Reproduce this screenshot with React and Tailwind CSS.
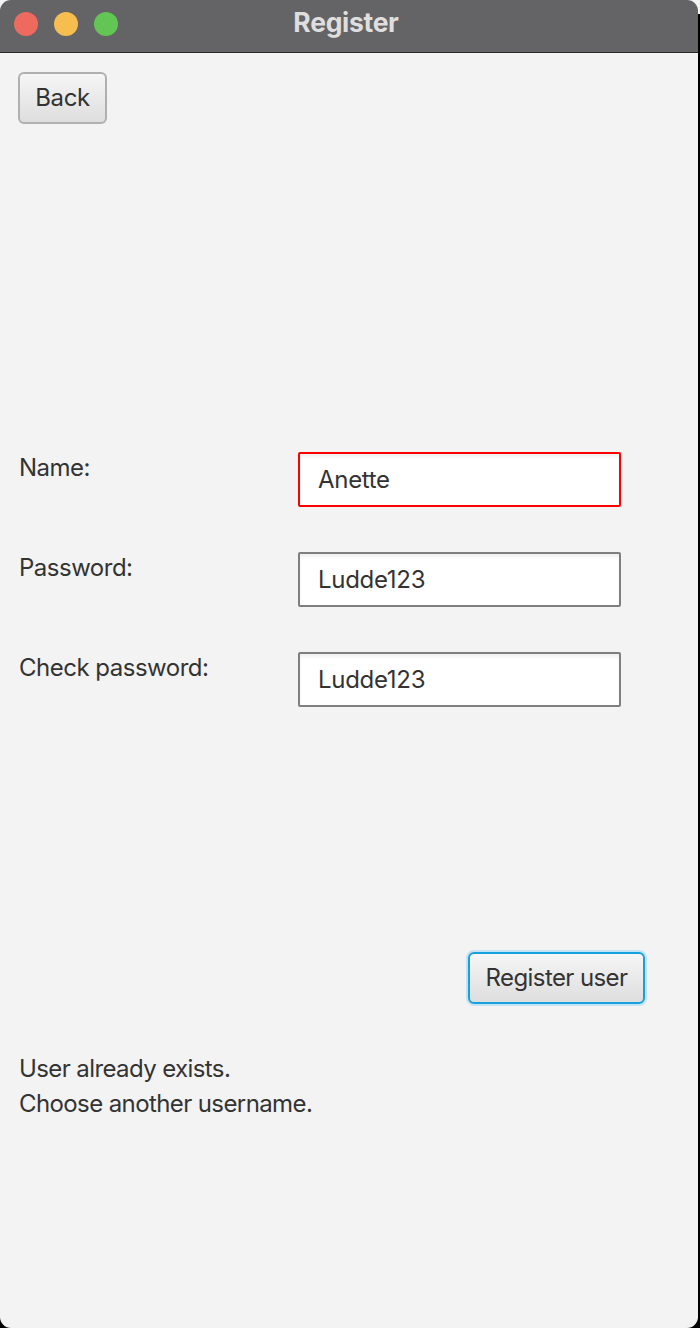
export default function App() {
    const font = { fontFamily: "Inter, 'Noto Sans', sans-serif" };

    return (
        <div
            className="w-[700px] h-[1328px] bg-[linear-gradient(to_bottom,#f4f4f4_14px,#000_14px)] flex"
            style={font}
        >
            <div className="w-[698px] h-[1328px] rounded-[11px] overflow-hidden bg-[#f3f3f3] flex flex-col">
                {/* title bar */}
                <div className="relative h-[53px] bg-[#646365] border-b border-[#2a2a2a] flex items-center shrink-0">
                    <div className="flex gap-[16px] pl-[14px] pb-[5px]">
                        <span className="w-[24px] h-[24px] rounded-full bg-[#ee6a5f]" />
                        <span className="w-[24px] h-[24px] rounded-full bg-[#f5be4f]" />
                        <span className="w-[24px] h-[24px] rounded-full bg-[#62c554]" />
                    </div>
                    <div className="absolute inset-0 flex items-center justify-center pb-[6px]">
                        <span className="text-[26.5px] font-bold text-[#dedede] tracking-[-0.3px] mr-[6px]">Register</span>
                    </div>
                </div>

                {/* content */}
                <div className="flex flex-col px-[18px] pt-[19px] text-[#333333]">
                    <div>
                        <button className="w-[89px] h-[52px] rounded-[6px] border-2 border-[#b0b0b0] bg-[linear-gradient(to_bottom,#f6f6f6,#dedede)] text-[24px] tracking-[-0.4px] text-[#333]">
                            Back
                        </button>
                    </div>

                    <div className="mt-[328px] flex flex-col gap-[45px]">
                        {[
                            { label: "Name:", value: "Anette", error: true },
                            { label: "Password:", value: "Ludde123" },
                            { label: "Check password:", value: "Ludde123" },
                        ].map((row) => (
                            <div key={row.label} className="flex items-start">
                                <div className="w-[280px] pl-[1px] pt-[1px] text-[24px] leading-[29px] tracking-[-0.5px]">
                                    {row.label}
                                </div>
                                <div
                                    className={
                                        row.error
                                            ? "w-[323px] h-[55px] rounded-[2px] border-2 border-[#ff0000] bg-white shadow-[inset_0_3px_3px_rgba(0,0,0,0.06)] flex items-center pl-[18px] text-[24px] tracking-[-0.3px]"
                                            : "w-[323px] h-[55px] rounded-[2px] border-2 border-[#7f7f7f] bg-white shadow-[inset_0_3px_3px_rgba(0,0,0,0.06)] flex items-center pl-[18px] text-[24px] tracking-[-0.3px]"
                                    }
                                >
                                    {row.value}
                                </div>
                            </div>
                        ))}
                    </div>

                    <div className="mt-[245px] flex justify-end pr-[35px]">
                        <button className="w-[177px] h-[52px] rounded-[6px] border-[2.5px] border-[#16a0dc] shadow-[0_0_0_2px_#c4e4f3] bg-[linear-gradient(to_bottom,#f6f6f6,#dedede)] text-[24px] tracking-[-0.6px] text-[#333]">
                            Register user
                        </button>
                    </div>

                    <div className="mt-[47px] pl-[1px] text-[24px] leading-[35px] tracking-[-0.6px]">
                        <div>User already exists.</div>
                        <div>Choose another username.</div>
                    </div>
                </div>
            </div>
        </div>
    );
}
